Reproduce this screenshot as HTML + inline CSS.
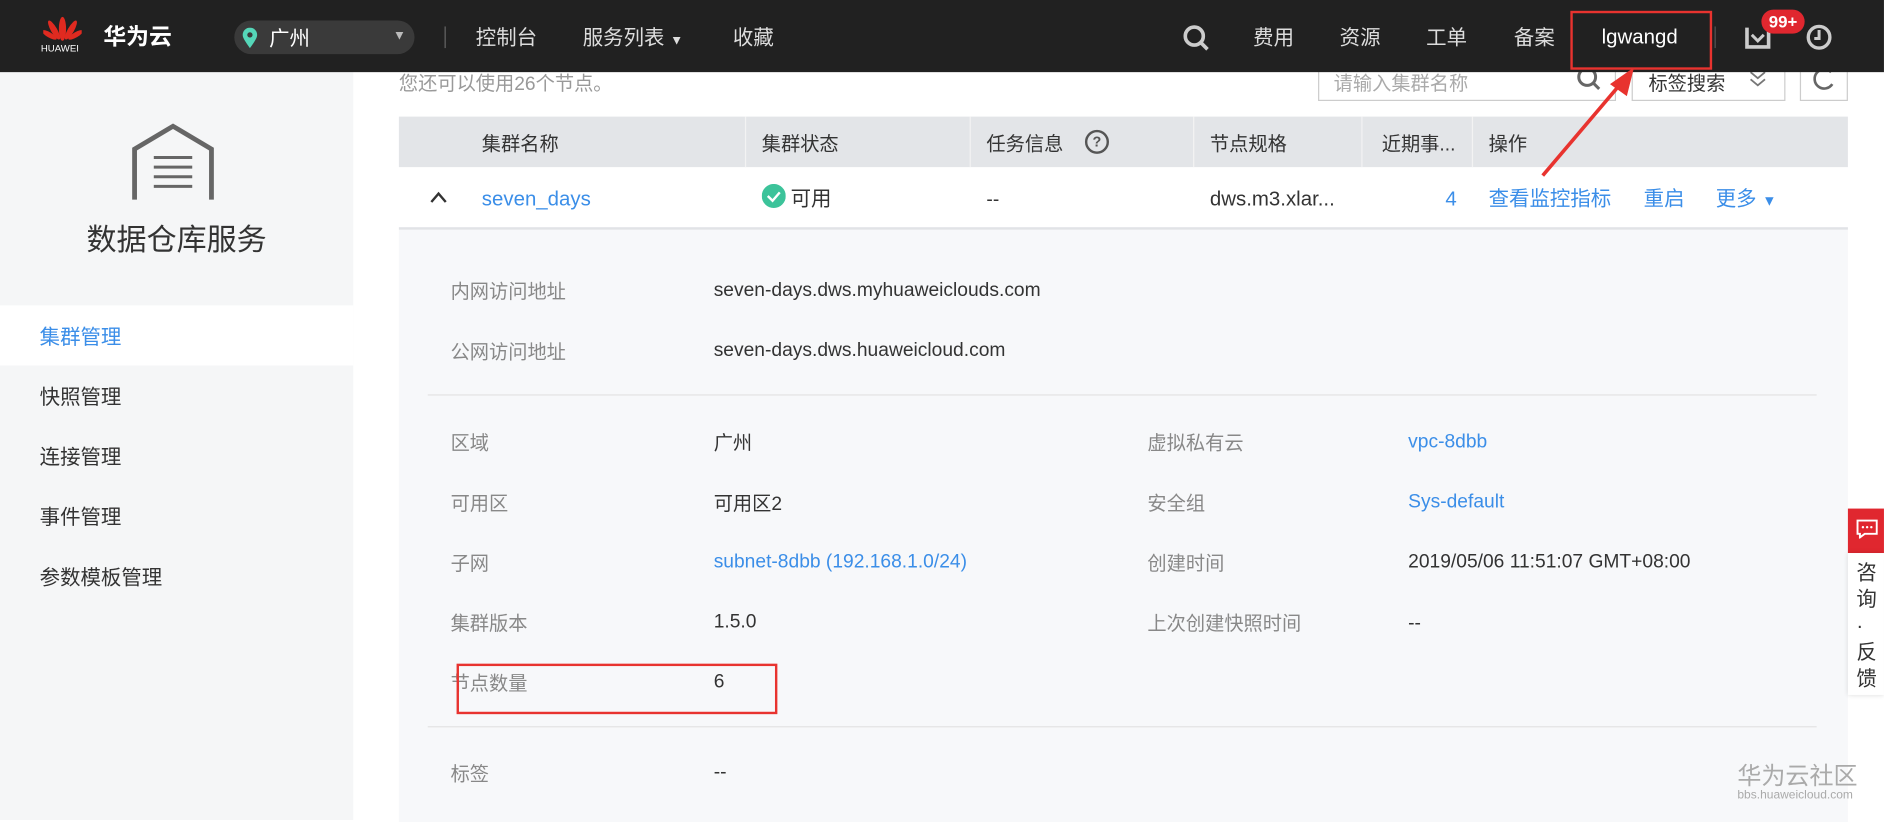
<!DOCTYPE html>
<html><head><meta charset="utf-8"><style>
body{margin:0;width:1884px;height:820px;overflow:hidden;background:#fff;font-family:"Liberation Sans","Noto Sans CJK SC",sans-serif}
#w{position:absolute;left:0;top:0;width:1568px;height:682px;transform:scale(1.2015,1.2023);transform-origin:0 0;background:#fff}
.a{position:absolute;white-space:nowrap}
.c{margin-top:-4px}
.hd{left:0;top:0;width:1568px;height:60px;background:#212121}
.n{color:#ddd;font-size:17px;top:17px}
.sb{left:0;top:60px;width:294px;height:622px;background:#f5f6f7}
.mi{left:33px;font-size:17px;color:#333;margin-top:-3px}
.th{font-size:16px;color:#333;top:106px}
.b{color:#3b8ee8}
.l{color:#888;font-size:16px;left:375px;margin-top:-4px}
.v{color:#333;font-size:16px;left:594px}
.l2{color:#888;font-size:16px;left:955px;margin-top:-4px}
.v2{color:#333;font-size:16px;left:1172px}
</style></head><body><div id="w">
<div class="a" style="left:332px;top:56px;font-size:16px;color:#999">您还可以使用26个节点。</div>
<div class="a" style="left:1097px;top:48px;width:246px;height:34px;border:1px solid #ccc;background:#fff"></div>
<div class="a" style="left:1110px;top:56px;font-size:16px;color:#aaa">请输入集群名称</div>
<svg class="a" style="left:1312px;top:55px" width="22" height="22"><circle cx="9" cy="9" r="7" fill="none" stroke="#666" stroke-width="2.5"/><path d="M14 14l5 5" stroke="#666" stroke-width="2.5"/></svg>
<div class="a" style="left:1358px;top:48px;width:126px;height:34px;border:1px solid #ccc;background:#fff"></div>
<div class="a" style="left:1372px;top:56px;font-size:16px;color:#333">标签搜索</div>
<svg class="a" style="left:1455px;top:58px" width="16" height="16"><path d="M2 2l6 5 6-5M2 8l6 5 6-5" fill="none" stroke="#777" stroke-width="1.5"/></svg>
<div class="a" style="left:1498px;top:48px;width:38px;height:34px;border:1px solid #ccc;background:#fff"></div>
<svg class="a" style="left:1506px;top:54px" width="24" height="24"><path d="M18 6A8 8 0 1 0 19 16" fill="none" stroke="#666" stroke-width="2.2"/></svg>
<div class="a" style="left:332px;top:97px;width:1206px;height:42px;background:#e3e5e8"></div>
<div class="a" style="left:620px;top:97px;width:1px;height:42px;background:#f3f3f3"></div>
<div class="a" style="left:807px;top:97px;width:1px;height:42px;background:#f3f3f3"></div>
<div class="a" style="left:993px;top:97px;width:1px;height:42px;background:#f3f3f3"></div>
<div class="a" style="left:1133px;top:97px;width:1px;height:42px;background:#f3f3f3"></div>
<div class="a" style="left:1225px;top:97px;width:1px;height:42px;background:#f3f3f3"></div>
<div class="a th" style="left:401px">集群名称</div>
<div class="a th" style="left:634px">集群状态</div>
<div class="a th" style="left:821px">任务信息</div>
<div class="a" style="left:903px;top:108px;width:16px;height:16px;border:2px solid #555;border-radius:50%;font-size:12px;line-height:16px;text-align:center;color:#555;font-weight:bold">?</div>
<div class="a th" style="left:1007px">节点规格</div>
<div class="a th" style="left:1150px">近期事...</div>
<div class="a th" style="left:1239px">操作</div>
<svg class="a" style="left:357px;top:158px" width="16" height="12"><path d="M2 10l6-7 6 7" fill="none" stroke="#333" stroke-width="2"/></svg>
<div class="a b" style="left:401px;top:156px;font-size:17px">seven_days</div>
<svg class="a" style="left:634px;top:153px" width="20" height="20"><circle cx="10" cy="10" r="10" fill="#3cc39a"/><path d="M5 10l4 4 6-7" fill="none" stroke="#fff" stroke-width="2"/></svg>
<div class="a c" style="left:658px;top:155px;font-size:17px;color:#333">可用</div>
<div class="a" style="left:821px;top:158px;font-size:16px;color:#333">--</div>
<div class="a" style="left:1007px;top:156px;font-size:17px;color:#333">dws.m3.xlar...</div>
<div class="a b" style="left:1203px;top:156px;font-size:17px">4</div>
<div class="a b c" style="left:1239px;top:155px;font-size:17px">查看监控指标</div>
<div class="a b c" style="left:1368px;top:155px;font-size:17px">重启</div>
<div class="a b c" style="left:1428px;top:155px;font-size:17px">更多 <span style="font-size:12px">▼</span></div>
<div class="a" style="left:332px;top:189px;width:1206px;height:493px;background:#f7f8fa;border-top:2px solid #e1e3e6"></div>
<div class="a l" style="top:233px">内网访问地址</div><div class="a v" style="top:233px">seven-days.dws.myhuaweiclouds.com</div>
<div class="a l" style="top:283px">公网访问地址</div><div class="a v" style="top:283px">seven-days.dws.huaweicloud.com</div>
<div class="a" style="left:356px;top:328px;width:1156px;height:1px;background:#e3e3e3"></div>
<div class="a l" style="top:359px">区域</div><div class="a v c" style="top:359px">广州</div>
<div class="a l2" style="top:359px">虚拟私有云</div><div class="a v2" style="top:359px;color:#3b8ee8">vpc-8dbb</div>
<div class="a l" style="top:409px">可用区</div><div class="a v c" style="top:409px">可用区2</div>
<div class="a l2" style="top:409px">安全组</div><div class="a v2" style="top:409px;color:#3b8ee8">Sys-default</div>
<div class="a l" style="top:459px">子网</div><div class="a v" style="top:459px;color:#3b8ee8">subnet-8dbb (192.168.1.0/24)</div>
<div class="a l2" style="top:459px">创建时间</div><div class="a v2" style="top:459px">2019/05/06 11:51:07 GMT+08:00</div>
<div class="a l" style="top:509px">集群版本</div><div class="a v" style="top:509px">1.5.0</div>
<div class="a l2" style="top:509px">上次创建快照时间</div><div class="a v2" style="top:510px">--</div>
<div class="a l" style="top:559px">节点数量</div><div class="a v" style="top:559px">6</div>
<div class="a" style="left:380px;top:552px;width:263px;height:38px;border:2px solid #e8332f"></div>
<div class="a" style="left:356px;top:604px;width:1156px;height:1px;background:#e3e3e3"></div>
<div class="a l" style="top:634px">标签</div><div class="a v" style="top:634px">--</div>
<div class="a" style="left:1446px;top:629px;font-size:20px;color:#aaa">华为云社区</div>
<div class="a" style="left:1446px;top:656px;font-size:10px;color:#aaa">bbs.huaweicloud.com</div>
<div class="a sb"></div>
<svg class="a" style="left:108px;top:102px" width="72" height="66"><path d="M4 64V22L36 3l32 19v42" fill="none" stroke="#666" stroke-width="4"/><path d="M20 29h32M20 37h32M20 45h32M20 53h32" stroke="#666" stroke-width="2.5"/></svg>
<div class="a" style="left:0;width:294px;text-align:center;top:180px;font-size:25px;color:#333">数据仓库服务</div>
<div class="a" style="left:0;top:254px;width:294px;height:50px;background:#fff"></div>
<div class="a mi" style="top:269px;color:#3b8ee8">集群管理</div>
<div class="a mi" style="top:319px">快照管理</div>
<div class="a mi" style="top:369px">连接管理</div>
<div class="a mi" style="top:419px">事件管理</div>
<div class="a mi" style="top:469px">参数模板管理</div>
<div class="a hd"></div>
<svg class="a" style="left:36px;top:12px" width="32" height="22"><g fill="#e02a20"><ellipse cx="16" cy="12" rx="3" ry="10"/><ellipse cx="9" cy="13" rx="2.6" ry="9" transform="rotate(-30 9 13)"/><ellipse cx="23" cy="13" rx="2.6" ry="9" transform="rotate(30 23 13)"/><ellipse cx="5" cy="17" rx="2.2" ry="7" transform="rotate(-60 5 17)"/><ellipse cx="27" cy="17" rx="2.2" ry="7" transform="rotate(60 27 17)"/></g></svg>
<div class="a" style="left:34px;top:36px;font-size:8px;color:#fff">HUAWEI</div>
<div class="a" style="left:86px;top:16px;font-size:19px;color:#fff;font-weight:bold">华为云</div>
<div class="a" style="left:195px;top:17px;width:150px;height:28px;border-radius:14px;background:#3a3a3a"></div>
<svg class="a" style="left:201px;top:23px" width="14" height="18"><path d="M7 17C2 10 1 8 1 6a6 6 0 0 1 12 0c0 2-1 4-6 11z" fill="#55d6b8"/><circle cx="7" cy="6" r="2.2" fill="#3a3a3a"/></svg>
<div class="a" style="left:224px;top:18px;font-size:17px;color:#fff">广州</div>
<div class="a" style="left:327px;top:24px;font-size:11px;color:#bbb">▼</div>
<div class="a" style="left:370px;top:22px;width:1px;height:18px;background:#666"></div>
<div class="a n" style="left:396px">控制台</div>
<div class="a n" style="left:485px">服务列表 <span style="font-size:11px">▼</span></div>
<div class="a n" style="left:610px">收藏</div>
<svg class="a" style="left:984px;top:20px" width="24" height="24"><circle cx="10" cy="10" r="7.5" fill="none" stroke="#ccc" stroke-width="3"/><path d="M15 15l6 6" stroke="#ccc" stroke-width="3"/></svg>
<div class="a n" style="left:1043px">费用</div>
<div class="a n" style="left:1115px">资源</div>
<div class="a n" style="left:1187px">工单</div>
<div class="a n" style="left:1260px">备案</div>
<div class="a n" style="left:1333px;color:#fff;top:21px">lgwangd</div>
<div class="a" style="left:1307px;top:9px;width:114px;height:45px;border:2px solid #e8332f"></div>
<div class="a" style="left:1427px;top:22px;width:1px;height:18px;background:#555"></div>
<svg class="a" style="left:1452px;top:21px" width="22" height="20"><path d="M2 2v16h18V2" fill="none" stroke="#ccc" stroke-width="3"/><path d="M6 8l5 5 5-5" fill="none" stroke="#ccc" stroke-width="2.5"/></svg>
<div class="a" style="left:1466px;top:8px;width:36px;height:20px;border-radius:10px;background:#e0272f;color:#fff;font-size:14px;font-weight:bold;text-align:center;line-height:20px">99+</div>
<svg class="a" style="left:1502px;top:19px" width="24" height="24"><circle cx="12" cy="12" r="9" fill="none" stroke="#ccc" stroke-width="2.8"/><path d="M12 6v7h-4" fill="none" stroke="#ccc" stroke-width="2.5"/></svg>
<svg class="a" style="left:1270px;top:50px" width="110" height="110"><path d="M14 96L82 16" stroke="#e8332f" stroke-width="3"/><path d="M90 6L70 20L84 30z" fill="#e8332f"/></svg>
<div class="a" style="left:1538px;top:423px;width:30px;height:37px;background:#e0272f"></div>
<svg class="a" style="left:1545px;top:432px" width="18" height="16"><path d="M1 1h16v11H7l-4 3v-3H1z" fill="none" stroke="#fff" stroke-width="1.6"/><circle cx="5.5" cy="6.5" r="1" fill="#fff"/><circle cx="9" cy="6.5" r="1" fill="#fff"/><circle cx="12.5" cy="6.5" r="1" fill="#fff"/></svg>
<div class="a" style="left:1538px;top:460px;width:30px;height:118px;background:#fff;box-shadow:0 0 4px rgba(0,0,0,.15)"></div>
<div class="a" style="left:1545px;top:466px;font-size:17px;color:#333;line-height:22px;width:20px;white-space:normal">咨询·反馈</div>
</div></body></html>
